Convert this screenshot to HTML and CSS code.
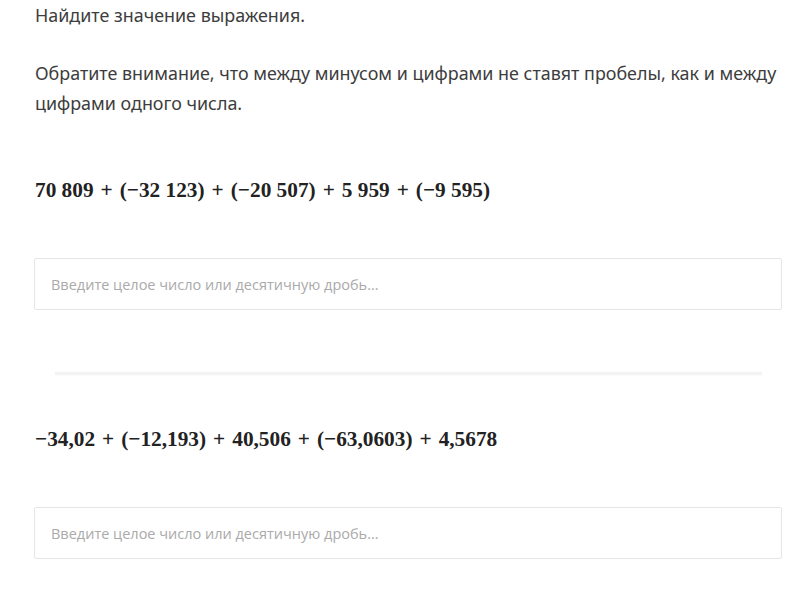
FILE: index.html
```html
<!DOCTYPE html>
<html lang="ru">
<head>
  <meta charset="UTF-8" />
  <title>Найдите значение выражения</title>
  <link rel="stylesheet" href="styles.css">
</head>
<body>
  <div class="task">
    <p class="text">Найдите значение выражения.</p>
    <p class="text">Обратите внимание, что между минусом и цифрами не ставят пробелы, как и между цифрами одного числа.</p>

    <div class="item">
      <div class="formula">70 809<span class="op">+</span>(−32 123)<span class="op">+</span>(−20 507)<span class="op">+</span>5 959<span class="op">+</span>(−9 595)</div>
      <input class="answer" type="text" placeholder="Введите целое число или десятичную дробь..." />
    </div>

    <div class="divider"></div>

    <div class="item">
      <div class="formula">−34,02<span class="op">+</span>(−12,193)<span class="op">+</span>40,506<span class="op">+</span>(−63,0603)<span class="op">+</span>4,5678</div>
      <input class="answer" type="text" placeholder="Введите целое число или десятичную дробь..." />
    </div>
  </div>
</body>
</html>
```

FILE: styles.css
```css
body {
  margin: 0;
  background: #fff;
  color: #333;
  font-family: 'Noto Sans', sans-serif;
}
.task {
  width: 748px;
  padding-left: 34px;
}
.text {
  margin: 0 0 28px;
  padding-left: 1px;
  font-size: 17.9px;
  line-height: 30px;
  color: #3d3d3d;
}
.item {
  padding-top: 29px;
}
.formula {
  padding-left: 1px;
  font-family: 'Liberation Serif', serif;
  font-weight: 700;
  font-size: 21.3px;
  line-height: 30px;
  color: #222;
  white-space: nowrap;
}
.op {
  margin: 0 7px;
}
.answer {
  display: block;
  box-sizing: border-box;
  width: 748px;
  height: 52px;
  margin-top: 53px;
  padding: 0 16px;
  border: 1px solid #e6e6e6;
  border-radius: 2px;
  outline: none;
  font-family: 'Open Sans', sans-serif;
  font-size: 14.5px;
  color: #333;
}
.answer::placeholder {
  color: #aaa;
}
.divider {
  height: 3px;
  margin: 62px 20px 20px 21px;
  background: #f3f3f3;
  box-shadow: 0 0 2px rgba(0,0,0,0.05);
}
```
